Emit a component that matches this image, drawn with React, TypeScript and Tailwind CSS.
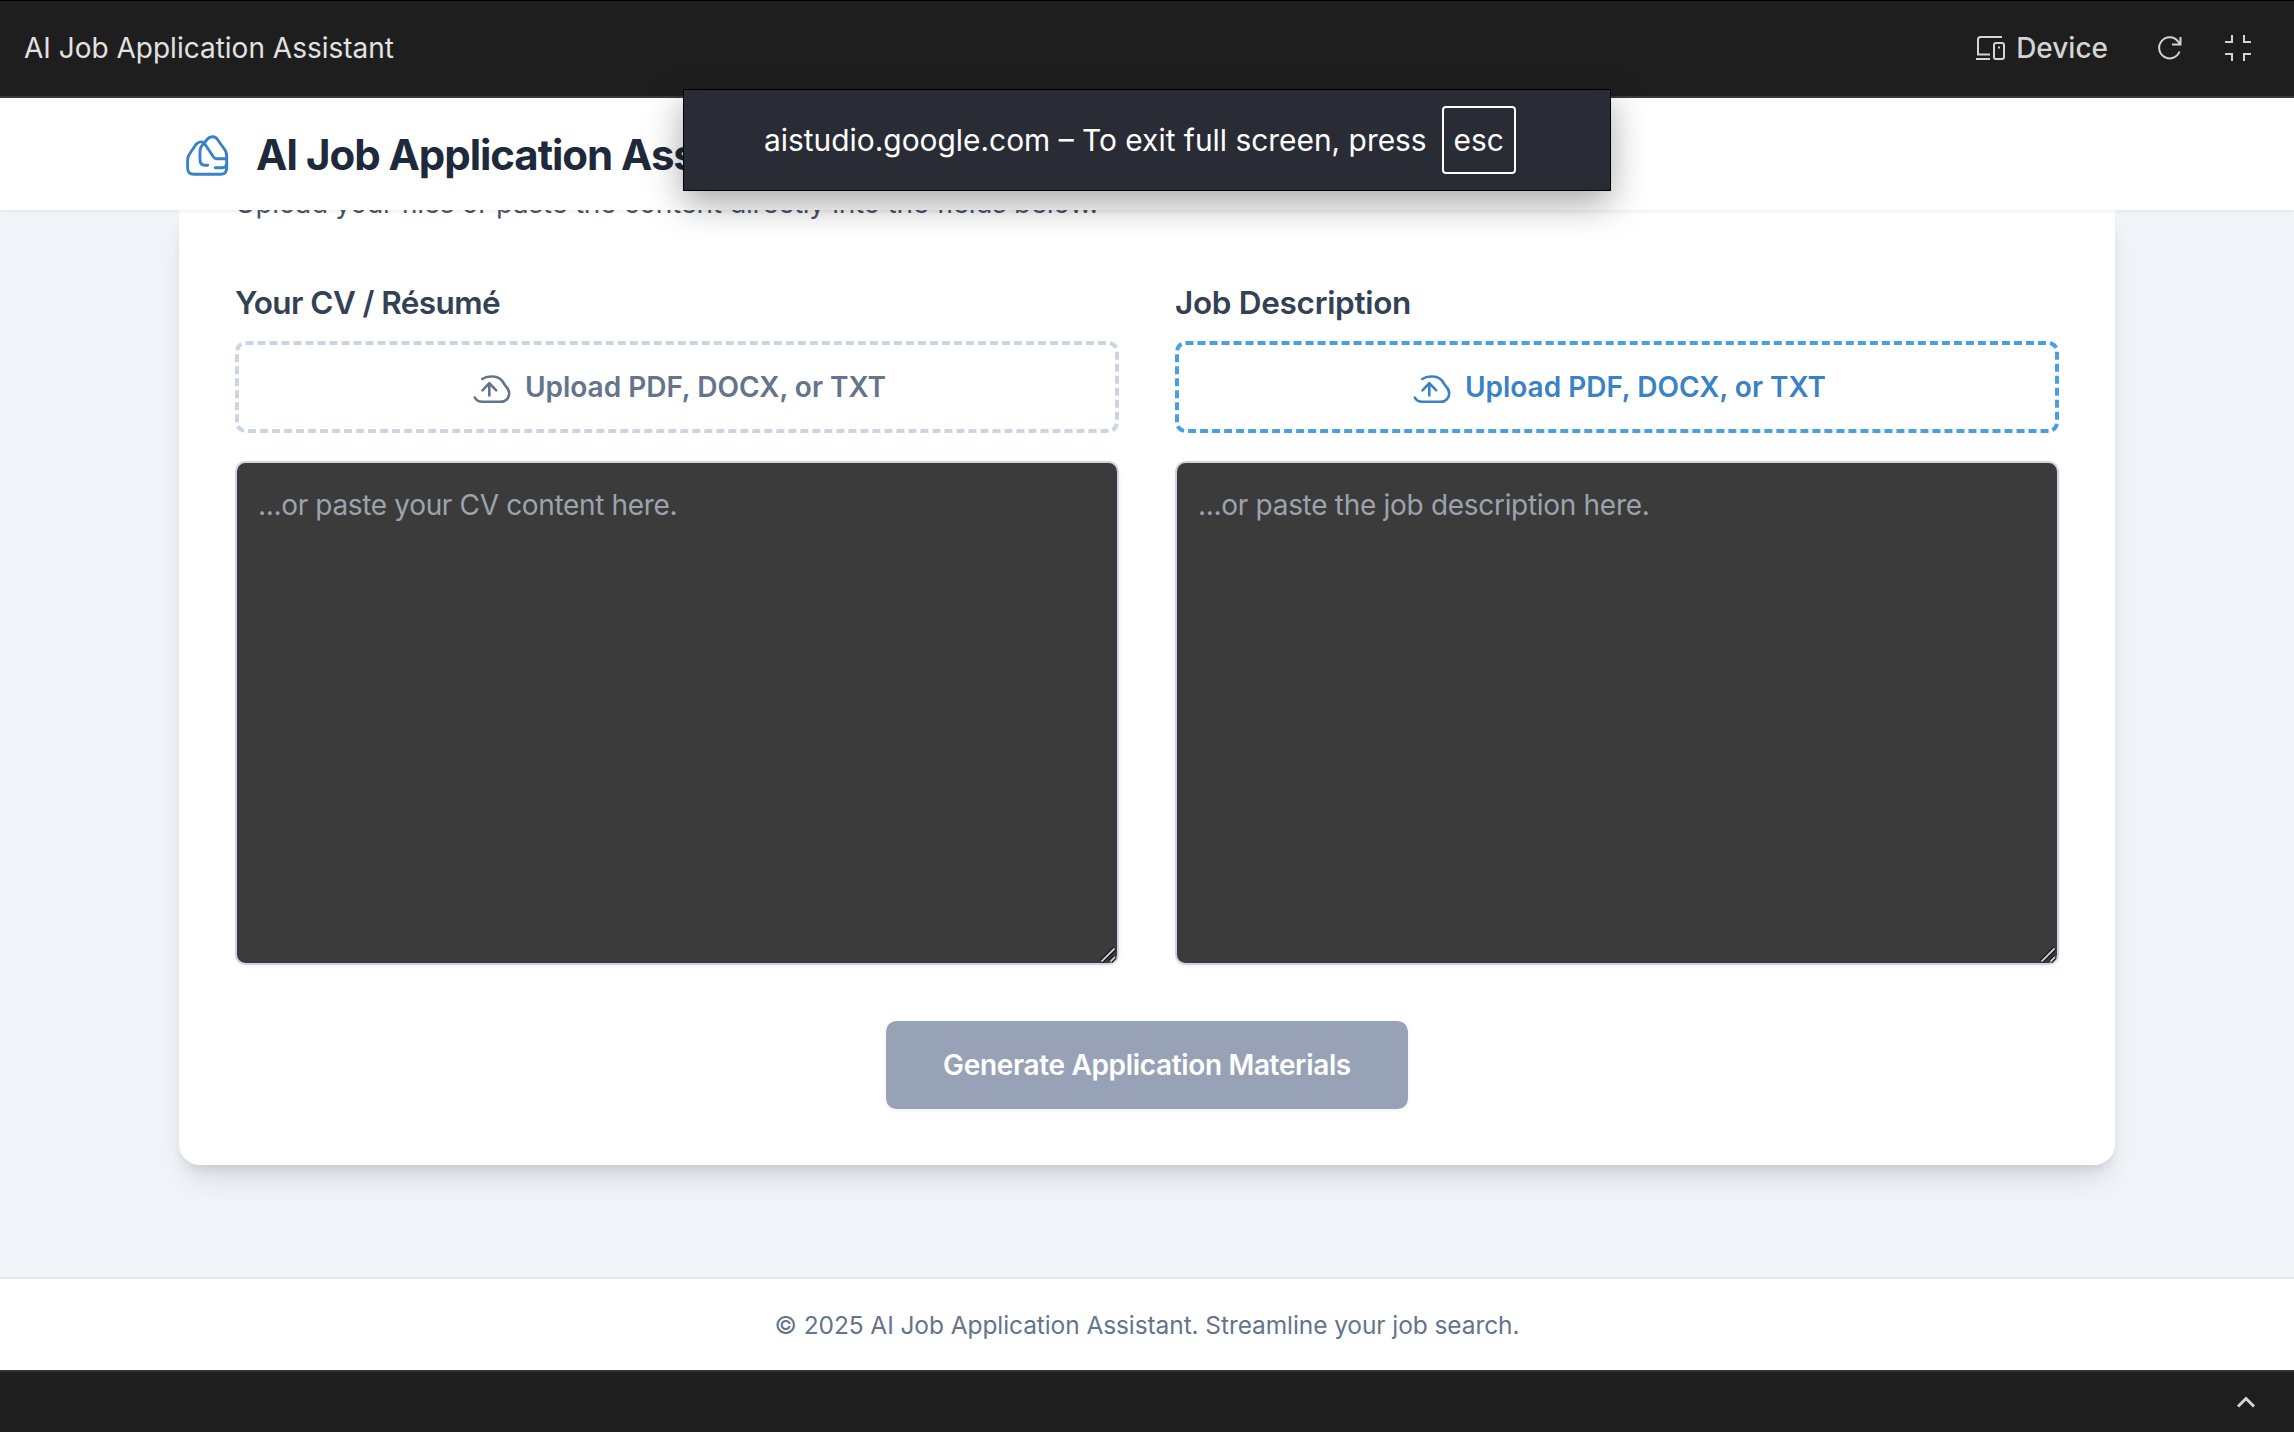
import React from 'react';

const UploadIcon = () => (
  <svg className="h-[35px] w-[44px] shrink-0" viewBox="0 0 44 35" fill="none" stroke="currentColor" strokeWidth="2.6" strokeLinecap="round" strokeLinejoin="round">
    <path d="M14.200 9C17 7 21 6.200 25 6.500C29 6.700 31.500 8 33.500 10.200C35.500 12.500 36.500 14.800 38 16.500C40 18.500 41.200 20.500 41.200 23.200C41.200 28.500 37.500 31.800 32.500 31.800H14.500C10.500 31.800 8 30 6.800 27.500" />
    <path d="M21.300 25.500V13.200M14.500 20.300L21.300 13.200L28.200 20.300" />
  </svg>
);

const Grip = () => (
  <svg className="absolute right-0 bottom-0 h-[18px] w-[18px]" viewBox="0 0 18 18" fill="none">
    <path d="M2.500 16.500L15.500 3.500M11.500 16.500L16 12" stroke="#111" strokeWidth="4.500" />
    <path d="M2.500 16.500L15.500 3.500M11.500 16.500L16 12" stroke="#c9c9c9" strokeWidth="1.900" />
  </svg>
);

type FieldProps = { label: string; labelClass: string; placeholder: string; placeholderClass: string; boxClass: string };

const Field = ({ label, labelClass, placeholder, placeholderClass, boxClass }: FieldProps) => (
  <div className="flex flex-col">
    <div className="flex h-[59px] items-start text-[31.5px] leading-[42px] font-semibold text-[#334155]">
      <span className={labelClass}>{label}</span>
    </div>
    <div className={`flex h-[92px] items-center justify-center gap-[13px] rounded-[10.5px] border-4 border-dashed ${boxClass}`}>
      <UploadIcon />
      <span className="text-[28px] leading-[42px] font-semibold">Upload PDF, DOCX, or TXT</span>
    </div>
    <div className="relative mt-[28px] h-[504px] rounded-[10.5px] border-2 border-[#cbd5e1] bg-[#3b3b3b] px-[21px] py-[21px] text-[28px] leading-[42px] text-[#9ca3af] shadow-[0_2px_4px_rgba(0,0,0,0.05)]">
      <span className={placeholderClass}>{placeholder}</span>
      <Grip />
    </div>
  </div>
);

export default function App() {
  return (
    <div className="relative flex h-[1432px] w-[2294px] flex-col overflow-hidden bg-[#f1f5f9] font-['Inter',sans-serif]">
      <div className="flex h-[98px] shrink-0 items-center border-t border-b-2 border-t-black border-b-[#3a3a3a] bg-[#1e1e1e] pb-[2px] pl-[24px] text-[28px] text-[#e2e2e2]">
        <span>AI Job Application Assistant</span>
        <div className="mr-[43px] ml-auto flex items-center text-[#d4d4d4]">
          <svg className="mr-[11px] h-[26px] w-[30px]" viewBox="0 0 30 26" fill="none" stroke="currentColor" strokeWidth="2">
            <path d="M27 2H5.500Q3 2 3 4.500V19.500H15M1 24H15" />
            <rect x="19" y="8" width="10" height="16" rx="2" />
            <path d="M23 12.500h2" />
          </svg>
          <span className="font-medium">Device</span>
          <svg className="ml-[49px] h-[26px] w-[26px]" viewBox="0 0 26 26" fill="none" stroke="currentColor" strokeWidth="2">
            <path d="M22.500 16.500A10.500 10.500 0 1 1 21 6.500L23.500 9.500M23.500 2V9.500H15" />
          </svg>
          <svg className="ml-[42px] h-[26px] w-[26px]" viewBox="0 0 26 26" fill="none" stroke="currentColor" strokeWidth="2">
            <path d="M7 0V7H0M19 0V7H26M7 26V19H0M19 26V19H26" />
          </svg>
        </div>
      </div>

      <header className="relative z-10 flex h-[112px] shrink-0 items-center bg-white pl-[186px] shadow-[0_2px_4px_rgba(0,0,0,0.06)]">
        <svg className="h-[44px] w-[43px]" viewBox="0 -1 43 44" fill="none" stroke="#3a82c6" strokeWidth="2.900" strokeLinecap="round" strokeLinejoin="round">
          <path d="M18.500 10C15.500 8 12 9 10 11.500L3.500 21C2.200 23 1.600 24.500 1.600 27V35Q1.600 41.300 8 41.300H34.500Q40.700 41.300 40.700 35V23C40.700 20.500 40.200 19 39 17L31.500 6.500C29.500 3 24 2.700 21.500 6L17.500 11C14.500 13.500 14 15 14 18.500V26.500Q14 32.300 19 32.300H21.700" />
          <path d="M18.500 10.500L27.500 24Q28.700 25.700 30.500 25.700H40.700M29.300 34.700H36Q39.500 34.700 40.500 32" />
        </svg>
        <span className="ml-[27px] text-[42px] font-bold tracking-[-1.05px] whitespace-nowrap text-[#1e293b]">AI Job Application Assistant</span>
      </header>

      <main className="mx-auto flex h-[955px] w-[1936px] shrink-0 flex-col rounded-b-[21px] bg-white px-[56px] shadow-[0_20px_30px_-6px_rgba(0,0,0,0.1),0_8px_12px_-4px_rgba(0,0,0,0.1)]">
        <p className="-mt-[28px] h-[42px] text-[28px] leading-[42px] tracking-[-0.32px] text-[#475569]">
          <span>Upload your files or paste the content directly into the fields below.</span>
        </p>
        <div className="mt-[58px] grid grid-cols-2 gap-[56px]">
          <Field label="Your CV / Résumé" labelClass="tracking-[-0.6px]" placeholder="...or paste your CV content here." placeholderClass="tracking-[-0.34px]" boxClass="border-[#cbd5e1] text-[#64748b]" />
          <Field label="Job Description" labelClass="tracking-[-0.3px]" placeholder="...or paste the job description here." placeholderClass="tracking-[-0.3px]" boxClass="border-[#4a9fe0] text-[#3a82c6]" />
        </div>
        <div className="mt-[56px] flex h-[88px] w-[522px] items-center justify-center self-center rounded-[10.5px] bg-[#98a2b7] text-[28px] font-semibold tracking-[-0.34px] text-white shadow-[0_2px_4px_rgba(0,0,0,0.06)]">
          <span className="whitespace-nowrap">Generate Application Materials</span>
        </div>
      </main>

      <footer className="mt-[112px] flex h-[93px] shrink-0 items-center justify-center border-t-2 border-[#e2e8f0] bg-white pt-[2px] text-[24.5px] tracking-[-0.09px] text-[#64748b]">
        <span>© 2025 AI Job Application Assistant. Streamline your job search.</span>
      </footer>

      <div className="flex h-[62px] shrink-0 items-center justify-end border-t-2 border-[#333] bg-[#1e1e1e] pr-[38px]">
        <svg className="h-[12px] w-[20px]" viewBox="0 0 20 12" fill="none" stroke="#d4d4d4" strokeWidth="3">
          <path d="M2 10.500L10 2.500L18 10.500" />
        </svg>
      </div>

      <div className="absolute top-[89px] left-[683px] z-20 flex h-[102px] w-[928px] items-center border border-black bg-[#2a2c35] pl-[80px] text-[29.9px] text-white shadow-[0_12px_36px_rgba(0,0,0,0.35)]">
        <span className="whitespace-nowrap">aistudio.google.com – To exit full screen, press</span>
        <span className="ml-[15px] flex h-[68px] w-[74px] items-center justify-center rounded-[4px] border-2 border-white">esc</span>
      </div>
    </div>
  );
}
